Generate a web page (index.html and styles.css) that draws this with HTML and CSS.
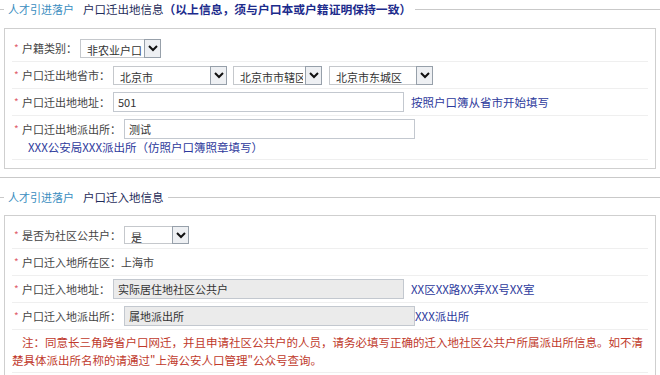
FILE: index.html
```html
<!DOCTYPE html>
<html lang="zh-CN">
<head>
    <meta charset="UTF-8">
    <meta name="viewport" content="width=device-width, initial-scale=1.0">
    <title>户口迁移信息</title>
    <link rel="stylesheet" href="styles.css">
</head>
<body>

    <fieldset class="section">
        <legend class="section-title"><span class="cat">人才引进落户</span><span class="name">户口迁出地信息</span><b class="warn">（以上信息，须与户口本或户籍证明保持一致）</b></legend>
        <div class="panel">
            <div class="row">
                <span class="req">*</span><label class="label">户籍类别：</label>
                <span class="select select-type">
                    <select><option>非农业户口</option></select>
                    <span class="arrow"><svg width="10" height="7" viewBox="0 0 10 7"><polyline points="1,1 5,5 9,1" fill="none" stroke="#111" stroke-width="2"/></svg></span>
                </span>
            </div>
            <div class="row">
                <span class="req">*</span><label class="label">户口迁出地省市：</label>
                <span class="select select-prov">
                    <select><option>北京市</option></select>
                    <span class="arrow"><svg width="10" height="7" viewBox="0 0 10 7"><polyline points="1,1 5,5 9,1" fill="none" stroke="#111" stroke-width="2"/></svg></span>
                </span>
                <span class="select select-city">
                    <select><option>北京市市辖区</option></select>
                    <span class="arrow"><svg width="10" height="7" viewBox="0 0 10 7"><polyline points="1,1 5,5 9,1" fill="none" stroke="#111" stroke-width="2"/></svg></span>
                </span>
                <span class="select select-dist">
                    <select><option>北京市东城区</option></select>
                    <span class="arrow"><svg width="10" height="7" viewBox="0 0 10 7"><polyline points="1,1 5,5 9,1" fill="none" stroke="#111" stroke-width="2"/></svg></span>
                </span>
            </div>
            <div class="row">
                <span class="req">*</span><label class="label">户口迁出地地址：</label>
                <input class="input" type="text" value="501">
                <span class="hint">按照户口簿从省市开始填写</span>
            </div>
            <div class="row row-wrap">
                <span class="req">*</span><label class="label">户口迁出地派出所：</label>
                <input class="input" type="text" value="测试">
                <div class="hint hint-line">XXX公安局XXX派出所（仿照户口簿照章填写）</div>
            </div>
        </div>
    </fieldset>

    <fieldset class="section">
        <legend class="section-title"><span class="cat">人才引进落户</span><span class="name">户口迁入地信息</span></legend>
        <div class="panel">
            <div class="row">
                <span class="req">*</span><label class="label">是否为社区公共户：</label>
                <span class="select select-yes">
                    <select><option>是</option></select>
                    <span class="arrow"><svg width="10" height="7" viewBox="0 0 10 7"><polyline points="1,1 5,5 9,1" fill="none" stroke="#111" stroke-width="2"/></svg></span>
                </span>
            </div>
            <div class="row">
                <span class="req">*</span><span class="label">户口迁入地所在区：上海市</span>
            </div>
            <div class="row">
                <span class="req">*</span><label class="label">户口迁入地地址：</label>
                <input class="input input-off" type="text" value="实际居住地社区公共户" readonly>
                <span class="hint">XX区XX路XX弄XX号XX室</span>
            </div>
            <div class="row">
                <span class="req">*</span><label class="label">户口迁入地派出所：</label>
                <input class="input input-off" type="text" value="属地派出所" readonly>
                <span class="hint hint-tight">XXX派出所</span>
            </div>
            <div class="row note">注：同意长三角跨省户口网迁，并且申请社区公共户的人员，请务必填写正确的迁入地社区公共户所属派出所信息。如不清楚具体派出所名称的请通过"上海公安人口管理"公众号查询。</div>
        </div>
    </fieldset>

</body>
</html>
```
FILE: styles.css
```css
body {
    margin: 0;
    font-family: "Noto Sans CJK SC", sans-serif;
    font-size: 11px;
    color: #444;
    background: #fff;
    overflow: hidden;
}
.section {
    margin: 0 -10px;
    padding: 10px 13px 8px;
    border: 1px solid #c9c9c9;
}
.section + .section {
    margin-top: 10px;
    padding-top: 9px;
}
.section-title {
    padding: 0 4px;
    font-size: 11.5px;
    line-height: 18px;
}
.cat {
    color: #3a8dc0;
    font-size: 11px;
    margin-right: 9px;
}
.name {
    color: #1f2d5a;
}
.warn {
    color: #1c2b8c;
    font-size: 11.8px;
}
.panel {
    border: 1px solid #cfcfcf;
    background: #fff;
    padding: 6px 7px 8px;
}
.row {
    display: flex;
    align-items: center;
    min-height: 20px;
    padding: 3px 0;
    border-bottom: 1px solid #efefef;
    line-height: 20px;
}
.row-wrap {
    flex-wrap: wrap;
}
.req {
    width: 8px;
    padding-left: 2px;
    color: #e0606a;
    font-size: 10px;
}
.label {
    margin-right: 3px;
}
.select {
    position: relative;
    display: inline-block;
    height: 19px;
    margin-right: 6px;
}
.select select {
    appearance: none;
    width: 100%;
    height: 100%;
    margin: 0;
    padding: 0 18px 0 6px;
    border: 1px solid #c5c8cc;
    border-radius: 0;
    background: #fff;
    font: inherit;
    color: #333;
}
.arrow {
    position: absolute;
    top: 0;
    right: 0;
    bottom: 0;
    width: 15px;
    border: 1px solid #97a0aa;
    background: #eef0f3;
    display: flex;
    align-items: center;
    justify-content: center;
    pointer-events: none;
}
.select-type { width: 81px; }
.select-prov { width: 114px; }
.select-city { width: 89px; margin-right: 7px; }
.select-dist { width: 104px; }
.select-yes { width: 65px; height: 18px; }
.input {
    box-sizing: border-box;
    width: 291px;
    height: 20px;
    margin: 0;
    padding: 0 4px;
    border: 1px solid #c3c8cf;
    background: #fff;
    font: inherit;
    color: #333;
}
.input-off {
    background: #ebebeb;
}
.hint {
    margin-left: 7px;
    color: #2d3a9c;
    font-size: 11.5px;
}
.hint-tight {
    margin-left: 0;
}
.hint-line {
    width: 100%;
    margin-left: 0;
    padding-left: 16px;
    line-height: 17px;
}
.note {
    display: block;
    color: #c0392b;
    font-size: 11.5px;
    line-height: 18px;
    text-indent: 10px;
}
```
